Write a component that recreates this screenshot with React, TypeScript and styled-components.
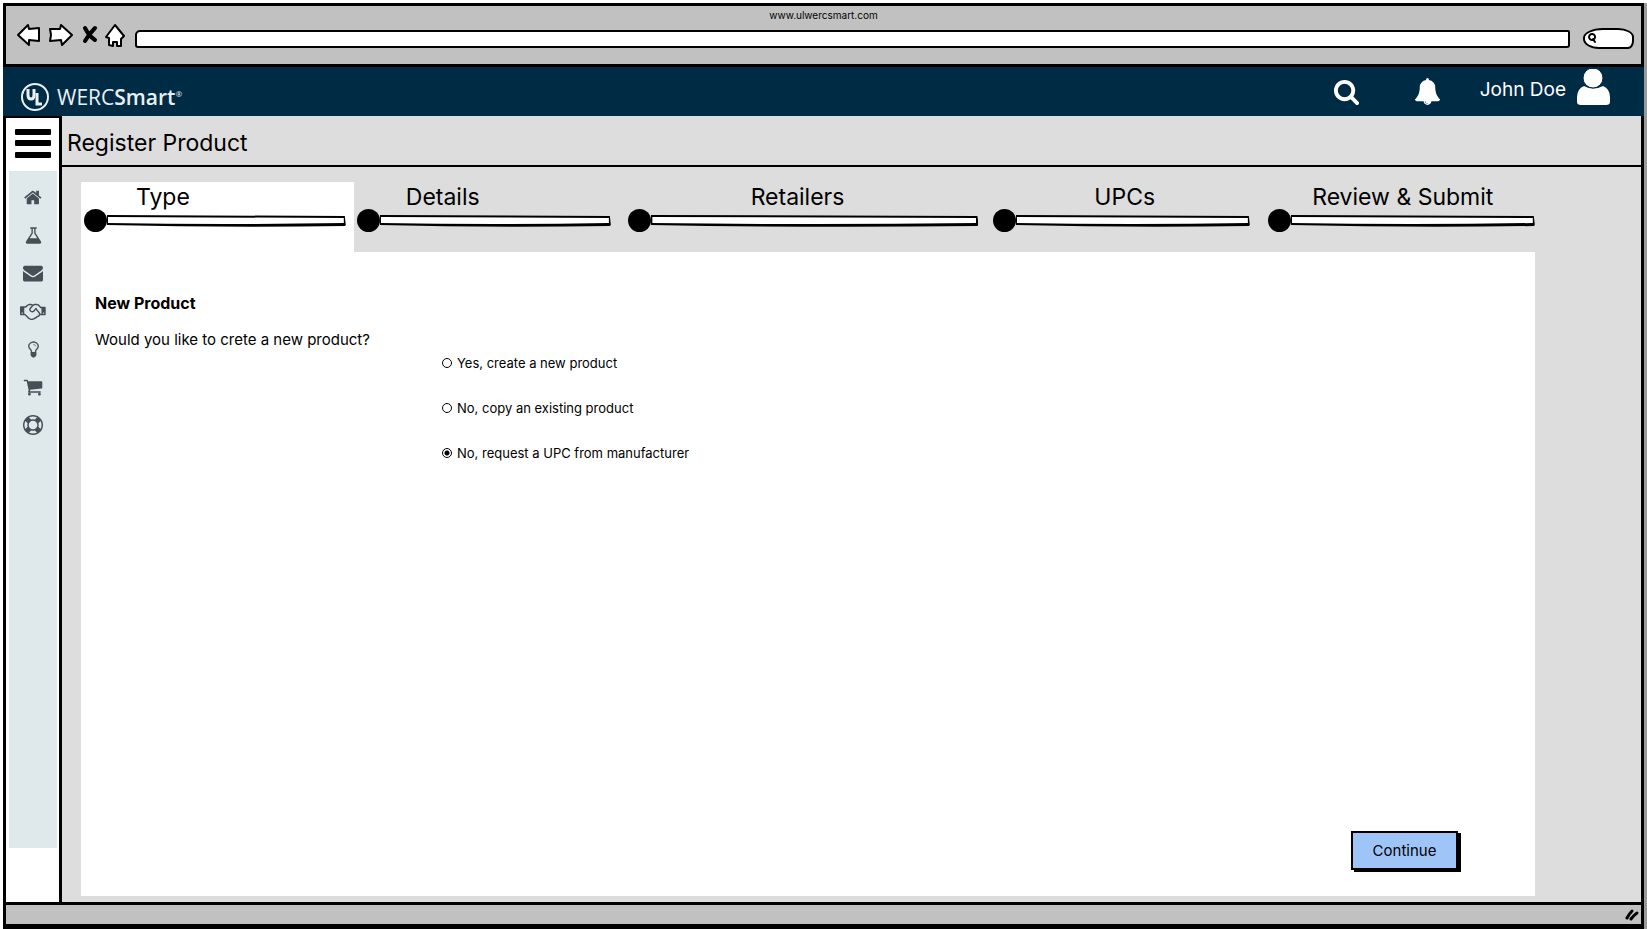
import React, { useState } from "react";
import styled, { createGlobalStyle } from "styled-components";

const ink = "#000";
const navy = "#002b45";
const chrome = "#c1c1c1";
const canvas = "#dddddd";
const slate = "#474f56";

const GlobalStyle = createGlobalStyle`
  * { box-sizing: border-box; }
  body { margin: 0; background: #fff; color: ${ink}; font-family: Inter, "Liberation Sans", sans-serif; }
  button, input { font: inherit; color: inherit; }
`;

const Page = styled.div`
  min-height: 100vh;
  padding: 3px 3px 0;
  display: flex;
  flex-direction: column;
`;
const Frame = styled.div`
  flex: 1;
  display: flex;
  flex-direction: column;
  border: 3px solid ${ink};
  border-bottom-width: 5px;
  box-shadow: 3px 0 0 #9a9a9a;
`;

/* Browser chrome */
const Chrome = styled.header`
  height: 61px;
  padding-top: 3px;
  background: ${chrome};
  border-bottom: 3px solid ${ink};
`;
const WindowTitle = styled.div`
  font-size: 10px;
  line-height: 12px;
  text-align: center;
`;
const Toolbar = styled.div`
  display: flex;
  align-items: center;
  height: 30px;
  padding: 0 7px 0 10px;
`;
const ToolGroup = styled.div`
  display: flex;
  align-items: center;
  gap: 7px;
  margin: -2px 10px 0 0;
`;
const ToolButton = styled.button`
  display: flex;
  padding: 0;
  border: 0;
  background: none;
`;
const Address = styled.input`
  flex: 1;
  min-width: 0;
  height: 18px;
  margin-top: 5px;
  padding: 0 6px;
  font-size: 10px;
  background: #fff;
  border: 2px solid ${ink};
  border-radius: 5px 2px 3px 3px;
`;
const SearchPill = styled.label`
  display: flex;
  align-items: center;
  width: 51px;
  height: 21px;
  margin: 4px 0 0 13px;
  padding-left: 2px;
  background: #fff;
  border: 2px solid ${ink};
  border-radius: 20px 16px 6px 16px / 10px 9px 8px 10px;
`;
const PillInput = styled.input`
  width: 30px;
  padding: 0;
  border: 0;
  background: none;
  font-size: 10px;
  outline: none;
`;

/* Application bar */
const AppBar = styled.div`
  display: flex;
  align-items: center;
  height: 49px;
  margin: 0 -3px;
  padding: 0 34px 0 17px;
  background: ${navy};
  color: #fff;
`;
const Brand = styled.a`
  display: flex;
  align-items: center;
  gap: 7px;
  margin-top: 11px;
  color: #e9f0f4;
  text-decoration: none;
  font-family: "Open Sans", sans-serif;
  font-size: 21px;
  line-height: 30px;
`;
const BrandStrong = styled.span`
  font-weight: 600;
`;
const Mark = styled.sup`
  font-size: 8px;
  line-height: 8px;
  vertical-align: 8px;
`;
const Actions = styled.div`
  display: flex;
  align-items: center;
  margin-left: auto;
`;
const ActionButton = styled.button<{ $gap: number }>`
  display: flex;
  align-items: center;
  padding: 0;
  margin-right: ${(p) => p.$gap}px;
  border: 0;
  background: none;
`;
const Account = styled.button`
  display: flex;
  align-items: flex-end;
  gap: 11px;
  padding: 0;
  border: 0;
  background: none;
  font-size: 19px;
  line-height: 24px;
  margin-top: -8px;
`;
const AccountName = styled.span`
  padding-bottom: 4px;
`;

/* Body */
const Body = styled.div`
  flex: 1;
  display: flex;
`;
const Sidebar = styled.aside`
  display: flex;
  flex-direction: column;
  width: 56px;
  padding-bottom: 54px;
  background: #fff;
  border: solid ${ink};
  border-width: 2px 3px 0 0;
`;
const MenuButton = styled.button`
  display: flex;
  justify-content: center;
  padding: 11px 0 13px;
  border: 0;
  background: none;
`;
const SideNav = styled.nav`
  flex: 1;
  display: flex;
  flex-direction: column;
  margin: 0 2px 0 3px;
  padding-top: 7px;
  background: #dfe8eb;
`;
const SideLink = styled.a`
  display: flex;
  align-items: center;
  justify-content: center;
  height: 38px;
  color: ${slate};
`;
const Main = styled.main`
  flex: 1;
  min-width: 0;
  display: flex;
  flex-direction: column;
  background: ${canvas};
`;
const PageTitle = styled.h1`
  margin: 0;
  padding: 15px 5px 10px;
  font-size: 23px;
  line-height: 24px;
  font-weight: 400;
  border-bottom: 2px solid ${ink};
`;
const Wizard = styled.section`
  flex: 1;
  display: flex;
  flex-direction: column;
  margin: 15px 106px 6px 19px;
`;
const Steps = styled.ol`
  display: grid;
  grid-template-columns: 273fr 271fr 366fr 275fr 270fr;
  margin: 0;
  padding: 0;
  list-style: none;
`;
const Step = styled.li<{ $active?: boolean; $end: number }>`
  min-width: 0;
  height: 70px;
  padding: 4px ${(p) => p.$end}px 0 3px;
  background: ${(p) => (p.$active ? "#fff" : "transparent")};
`;
const StepLabel = styled.div<{ $indent: number }>`
  padding-left: ${(p) => p.$indent}px;
  font-size: 23px;
  line-height: 23px;
  white-space: nowrap;
`;
const Track = styled.div`
  display: flex;
  align-items: center;
`;
const Dot = styled.span`
  flex: none;
  width: 23px;
  height: 23px;
  border-radius: 50%;
  background: ${ink};
`;
const Rail = styled.svg`
  flex: 1;
  width: 0;
  min-width: 0;
  height: 13px;
`;
const Panel = styled.form`
  flex: 1;
  display: flex;
  flex-direction: column;
  padding: 41px 77px 26px 14px;
  background: #fff;
`;
const Heading = styled.h2`
  margin: 0 0 17px;
  font-size: 16px;
  line-height: 20px;
  font-weight: 700;
`;
const Choices = styled.fieldset`
  margin: 0;
  padding: 0;
  border: 0;
`;
const Question = styled.legend`
  padding: 0;
  font-size: 15px;
  line-height: 20px;
`;
const ChoiceList = styled.div`
  display: flex;
  flex-direction: column;
  align-items: flex-start;
  gap: 27px;
  margin: 4px 0 0 347px;
`;
const Choice = styled.label`
  display: flex;
  align-items: center;
  gap: 5px;
  font-size: 13px;
  line-height: 18px;
`;
const Radio = styled.input`
  appearance: none;
  width: 10px;
  height: 10px;
  margin: 0;
  border: 1px solid ${ink};
  border-radius: 50%;
  background: #fff;
  &:checked {
    background: radial-gradient(circle, ${ink} 0 2px, #fff 3px);
  }
`;
const Continue = styled.button`
  align-self: flex-end;
  width: 107px;
  height: 39px;
  margin-top: auto;
  padding: 0;
  font-size: 15px;
  line-height: 20px;
  background: #9fc5f8;
  border: 2px solid ${ink};
  box-shadow: 3px 2px 0 ${ink};
`;
const StatusBar = styled.footer`
  display: flex;
  justify-content: flex-end;
  align-items: center;
  height: 22px;
  padding-right: 2px;
  background: ${chrome};
  border-top: 3px solid ${ink};
`;

const glyphs = {
  home: "M1408 992v480q0 26-19 45t-45 19h-384v-384h-256v384h-384q-26 0-45-19t-19-45v-480q0-1 .5-3t.5-3l575-474 575 474q1 2 1 6zm223-69l-62 74q-8 9-21 11h-3q-13 0-21-7l-692-577-692 577q-12 8-24 7-13-2-21-11l-62-74q-8-10-7-23.5t11-21.5l719-599q32-26 76-26t76 26l244 204v-195q0-14 9-23t23-9h192q14 0 23 9t9 23v408l219 182q10 8 11 21.5t-7 23.5z",
  flask: "M1591 1448q56 89 21.5 152.5t-140.5 63.5h-1152q-106 0-140.5-63.5t21.5-152.5l503-793v-399h-64q-26 0-45-19t-19-45 19-45 45-19h512q26 0 45 19t19 45-19 45-45 19h-64v399zm-779-725l-272 429h712l-272-429-20-31v-436h-128v436z",
  envelope: "M1792 710v794q0 66-47 113t-113 47h-1472q-66 0-113-47t-47-113v-794q44 49 101 87 362 246 497 345 57 42 92.5 65.5t94.5 48 110 24.5h2q51 0 110-24.5t94.5-48 92.5-65.5q170-123 498-345 57-39 100-87zm0-294q0 79-49 151t-122 123q-376 261-468 325-10 7-42.5 31t-54 38.5-52 32.5-57.5 27-50 9h-2q-23 0-50-9t-57.5-27-52-32.5-54-38.5-42.5-31q-91-64-262-182.5t-205-142.5q-62-42-117-115.5t-55-136.5q0-78 41.5-130t118.5-52h1472q65 0 112.5 47t47.5 113z",
  handshake: "M192 1152q40 0 56-32t0-64-56-32-56 32 0 64 56 32zm1473-58q-10-13-38.5-50t-41.5-54-38-49-42.5-53-40.5-47-45-49l-125 140q-83 94-208.5 92t-205.5-98q-57-69-56.5-158t58.5-157l177-206q-22-11-51-16.5t-47.5-6-56.5.5-49 1q-92 0-158 66l-158 158h-155v544q5 0 21-.5t22 0 19.5 2 20.5 4.5 17.5 8.5 18.5 13.5l297 292q115 111 227 111 78 0 125-47 57 20 112.5-8t72.5-85q74 6 127-44 20-18 36-45.5t14-50.5q10 10 43 10 43 0 77-21t49.5-53 12-71.5-30.5-73.5zm159 58h96v-512h-93l-157-180q-66-76-169-76h-167q-89 0-146 67l-209 243q-28 33-28 75t27 75q43 51 110 52t111-49l193-218q25-23 53.5-21.5t47 27 8.5 56.5q16 19 56 63t60 68q29 36 82.5 105.5t64.5 84.5q52 66 60 140zm288 0q40 0 56-32t0-64-56-32-56 32 0 64 56 32zm192-576v640q0 26-19 45t-45 19h-434q-27 65-82 106.5t-125 51.5q-33 48-80.5 81.5t-102.5 45.5q-42 53-104.5 81.5t-128.5 24.5q-60 34-126 39.5t-127.5-14-117-53.5-103.5-81l-287-282h-358q-26 0-45-19t-19-45v-672q0-26 19-45t45-19h421q14-14 47-48t47.5-48 44-40 50.5-37.5 51-25.5 62-19.5 68-5.5h117q99 0 181 56 82-56 181-56h167q35 0 67 6t56.5 14.5 51.5 26.5 44.5 31 43 39.5 39 42 41 48 41.5 48.5h355q26 0 45 19t19 45z",
  bulb: "M1120 576q0 13-9.5 22.5t-22.5 9.5-22.5-9.5-9.5-22.5q0-46-54-71t-106-25q-13 0-22.5-9.5t-9.5-22.5 9.5-22.5 22.5-9.5q50 0 99.5 16t87 54 37.5 90zm160 0q0-72-34.5-134t-90-101.5-123-62-136.5-22.5-136.5 22.5-123 62-90 101.5-34.5 134q0 101 68 180 10 11 30.5 33t30.5 33q128 153 141 298h228q13-145 141-298 10-11 30.5-33t30.5-33q68-79 68-180zm128 0q0 155-103 268-45 49-74.5 87t-59.5 95.5-34 107.5q47 28 47 82 0 37-25 64 25 27 25 64 0 52-45 81 13 23 13 47 0 46-31.5 71t-77.5 25q-20 44-60 70t-87 26-87-26-60-70q-46 0-77.5-25t-31.5-71q0-24 13-47-45-29-45-81 0-37 25-64-25-27-25-64 0-54 47-82-4-50-34-107.5t-59.5-95.5-74.5-87q-103-113-103-268 0-99 44.5-184.5t117-142 164-89 186.5-32.5 186.5 32.5 164 89 117 142 44.5 184.5z",
  cart: "M704 1536q0 52-38 90t-90 38-90-38-38-90 38-90 90-38 90 38 38 90zm896 0q0 52-38 90t-90 38-90-38-38-90 38-90 90-38 90 38 38 90zm128-1088v512q0 24-16.5 42.5t-40.5 21.5l-1044 122q13 60 13 70 0 16-24 64h920q26 0 45 19t19 45-19 45-45 19h-1024q-26 0-45-19t-19-45q0-11 8-31.5t16-36 21.5-40 15.5-29.5l-177-823h-204q-26 0-45-19t-19-45 19-45 45-19h256q16 0 28.5 6.5t19.5 15.5 13 24.5 8 26 5.5 29.5 4.5 26h1201q26 0 45 19t19 45z",
  ring: "M896 0q182 0 348 71t286 191 191 286 71 348-71 348-191 286-286 191-348 71-348-71-286-191-191-286-71-348 71-348 191-286 286-191 348-71zm0 128q-190 0-361 90l194 194q82-28 167-28t167 28l194-194q-171-90-361-90zm-678 1129l194-194q-28-82-28-167t28-167l-194-194q-90 171-90 361t90 361zm678 407q190 0 361-90l-194-194q-82 28-167 28t-167-28l-194 194q171 90 361 90zm0-384q159 0 271.5-112.5t112.5-271.5-112.5-271.5-271.5-112.5-271.5 112.5-112.5 271.5 112.5 271.5 271.5 112.5zm484-217l194 194q90-171 90-361t-90-361l-194 194q28 82 28 167t-28 167z",
  search: "M1216 832q0-185-131.5-316.5t-316.5-131.5-316.5 131.5-131.5 316.5 131.5 316.5 316.5 131.5 316.5-131.5 131.5-316.5zm512 832q0 52-38 90t-90 38q-54 0-90-38l-343-342q-179 124-399 124-143 0-273.5-55.5t-225-150-150-225-55.5-273.5 55.5-273.5 150-225 225-150 273.5-55.5 273.5 55.5 225 150 150 225 55.5 273.5q0 220-124 399l343 343q37 37 37 90z",
  bell: "M912 1696q0-16-16-16-59 0-101.5-42.5t-42.5-101.5q0-16-16-16t-16 16q0 73 51.5 124.5t124.5 51.5q16 0 16-16zm816-288q0 52-38 90t-90 38h-448q0 106-75 181t-181 75-181-75-75-181h-448q-52 0-90-38t-38-90q50-42 91-88t85-119.5 74.5-158.5 50-206 19.5-260q0-152 117-282.5t307-158.5q-8-19-8-39 0-40 28-68t68-28 68 28 28 68q0 20-8 39 190 28 307 158.5t117 282.5q0 139 19.5 260t50 206 74.5 158.5 85 119.5 91 88z",
};

type GlyphName = keyof typeof glyphs;

function Glyph({ name, size }: { name: GlyphName; size: number }) {
  const span = name === "handshake" ? 2304 : 1792;
  return (
    <svg height={size} viewBox={`0 0 ${span} 1792`} fill="currentColor" aria-hidden="true">
      <path d={glyphs[name]} />
    </svg>
  );
}

type SketchProps = { w: number; h: number; d: string; fill?: string; stroke?: number };

function Sketch({ w, h, d, fill = "#fff", stroke = 2 }: SketchProps) {
  return (
    <svg
      width={w}
      height={h}
      viewBox={`0 0 ${w} ${h}`}
      fill={fill}
      stroke={ink}
      strokeWidth={stroke}
      strokeLinejoin="round"
      strokeLinecap="round"
      aria-hidden="true"
    >
      <path d={d} />
    </svg>
  );
}

const tools: ({ label: string } & SketchProps)[] = [
  { label: "Back", w: 25, h: 24, d: "M2 12 L12 2 L13 6 L23 5 L23 18 L13 17 L13 22 Z" },
  { label: "Forward", w: 25, h: 24, d: "M2 6 L12 6 L13 2 L24 12 L14 22 L13 17 L2 18 L3 12 Z" },
  { label: "Stop", w: 18, h: 24, stroke: 4, fill: "none", d: "M5 5 Q9 13 15 17 M15 5 Q9 11 5 18" },
  { label: "Home", w: 20, h: 25, d: "M10 2 L19 13 L16 16 L16 23 L12 23 L12 19 L8 19 L8 23 L4 22 L4 15 L1 14 Z" },
];

const links: { label: string; icon: GlyphName; size: number }[] = [
  { label: "Home", icon: "home", size: 19 },
  { label: "Products", icon: "flask", size: 19 },
  { label: "Messages", icon: "envelope", size: 20 },
  { label: "Partners", icon: "handshake", size: 20 },
  { label: "Ideas", icon: "bulb", size: 19 },
  { label: "Cart", icon: "cart", size: 20 },
  { label: "Help", icon: "ring", size: 20 },
];

const steps = [
  { label: "Type", indent: 52, end: 8 },
  { label: "Details", indent: 49, end: 14 },
  { label: "Retailers", indent: 123, end: 12 },
  { label: "UPCs", indent: 101, end: 15 },
  { label: "Review & Submit", indent: 44, end: 0 },
];

const choices = ["Yes, create a new product", "No, copy an existing product", "No, request a UPC from manufacturer"];

export default function App() {
  const [choice, setChoice] = useState(2);
  return (
    <>
      <GlobalStyle />
      <Page>
        <Frame>
          <Chrome>
            <WindowTitle>www.ulwercsmart.com</WindowTitle>
            <Toolbar>
              <ToolGroup>
                {tools.map(({ label, ...shape }) => (
                  <ToolButton key={label} aria-label={label}>
                    <Sketch {...shape} />
                  </ToolButton>
                ))}
              </ToolGroup>
              <Address aria-label="Address" type="text" />
              <SearchPill>
                <Sketch w={10} h={12} fill="none" d="M5 2 a3 3 0 1 0 .1 0 M6 7 L8 10" />
                <PillInput aria-label="Search the web" type="text" />
              </SearchPill>
            </Toolbar>
          </Chrome>

          <AppBar>
            <Brand href="#">
              <svg width="30" height="30" viewBox="0 0 30 30" fill="none" stroke="currentColor" aria-hidden="true">
                <circle cx="15" cy="15" r="13" strokeWidth="2" />
                <path d="M8 7 V13 Q8 17 11 17 Q14 17 14 13 V7" strokeWidth="3" />
                <path d="M17 11 V22 H22" strokeWidth="3" />
              </svg>
              <span>
                WERC<BrandStrong>Smart</BrandStrong>
                <Mark>®</Mark>
              </span>
            </Brand>
            <Actions>
              <ActionButton $gap={54} aria-label="Search">
                <Glyph name="search" size={27} />
              </ActionButton>
              <ActionButton $gap={39} aria-label="Notifications">
                <Glyph name="bell" size={27} />
              </ActionButton>
              <Account>
                <AccountName>John Doe</AccountName>
                <svg width="33" height="37" viewBox="0 0 33 37" fill="#fff" aria-hidden="true">
                  <path d="M7 17 Q16 22 26 17 Q33 20 33 28 V33 Q33 36 29 36 H4 Q0 36 0 33 V28 Q0 20 7 17 Z" />
                  <ellipse cx="16" cy="9" rx="10" ry="10" stroke={navy} strokeWidth="1" />
                </svg>
              </Account>
            </Actions>
          </AppBar>

          <Body>
            <Sidebar>
              <MenuButton aria-label="Menu">
                <svg width="36" height="29" viewBox="0 0 36 29" aria-hidden="true">
                  <rect width="36" height="6" rx="1" />
                  <rect y="11" width="36" height="6" rx="1" />
                  <rect y="23" width="36" height="6" rx="1" />
                </svg>
              </MenuButton>
              <SideNav aria-label="Main">
                {links.map((l) => (
                  <SideLink key={l.label} href="#" aria-label={l.label}>
                    <Glyph name={l.icon} size={l.size} />
                  </SideLink>
                ))}
              </SideNav>
            </Sidebar>
            <Main>
              <PageTitle>Register Product</PageTitle>
              <Wizard>
                <Steps>
                  {steps.map((s, i) => (
                    <Step key={s.label} $active={i === 0} $end={s.end} aria-current={i === 0 ? "step" : undefined}>
                      <StepLabel $indent={s.indent}>{s.label}</StepLabel>
                      <Track>
                        <Dot />
                        <Rail viewBox="0 0 240 13" preserveAspectRatio="none" aria-hidden="true">
                          <path d="M0 1 L239 2 L240 11 L239 12 Q120 14 0 11 Z" />
                          <path d="M1 3 L238 4 L238 9 Q120 11 1 9 Z" fill="#fff" />
                        </Rail>
                      </Track>
                    </Step>
                  ))}
                </Steps>
                <Panel onSubmit={(e) => e.preventDefault()}>
                  <Heading>New Product</Heading>
                  <Choices>
                    <Question>Would you like to crete a new product?</Question>
                    <ChoiceList>
                      {choices.map((c, i) => (
                        <Choice key={c}>
                          <Radio type="radio" name="kind" checked={choice === i} onChange={() => setChoice(i)} />
                          {c}
                        </Choice>
                      ))}
                    </ChoiceList>
                  </Choices>
                  <Continue type="submit">Continue</Continue>
                </Panel>
              </Wizard>
            </Main>
          </Body>

          <StatusBar>
            <Sketch w={14} h={12} stroke={3} d="M2 9 Q4 5 7 2 M6 10 Q9 6 12 4" fill="none" />
          </StatusBar>
        </Frame>
      </Page>
    </>
  );
}
